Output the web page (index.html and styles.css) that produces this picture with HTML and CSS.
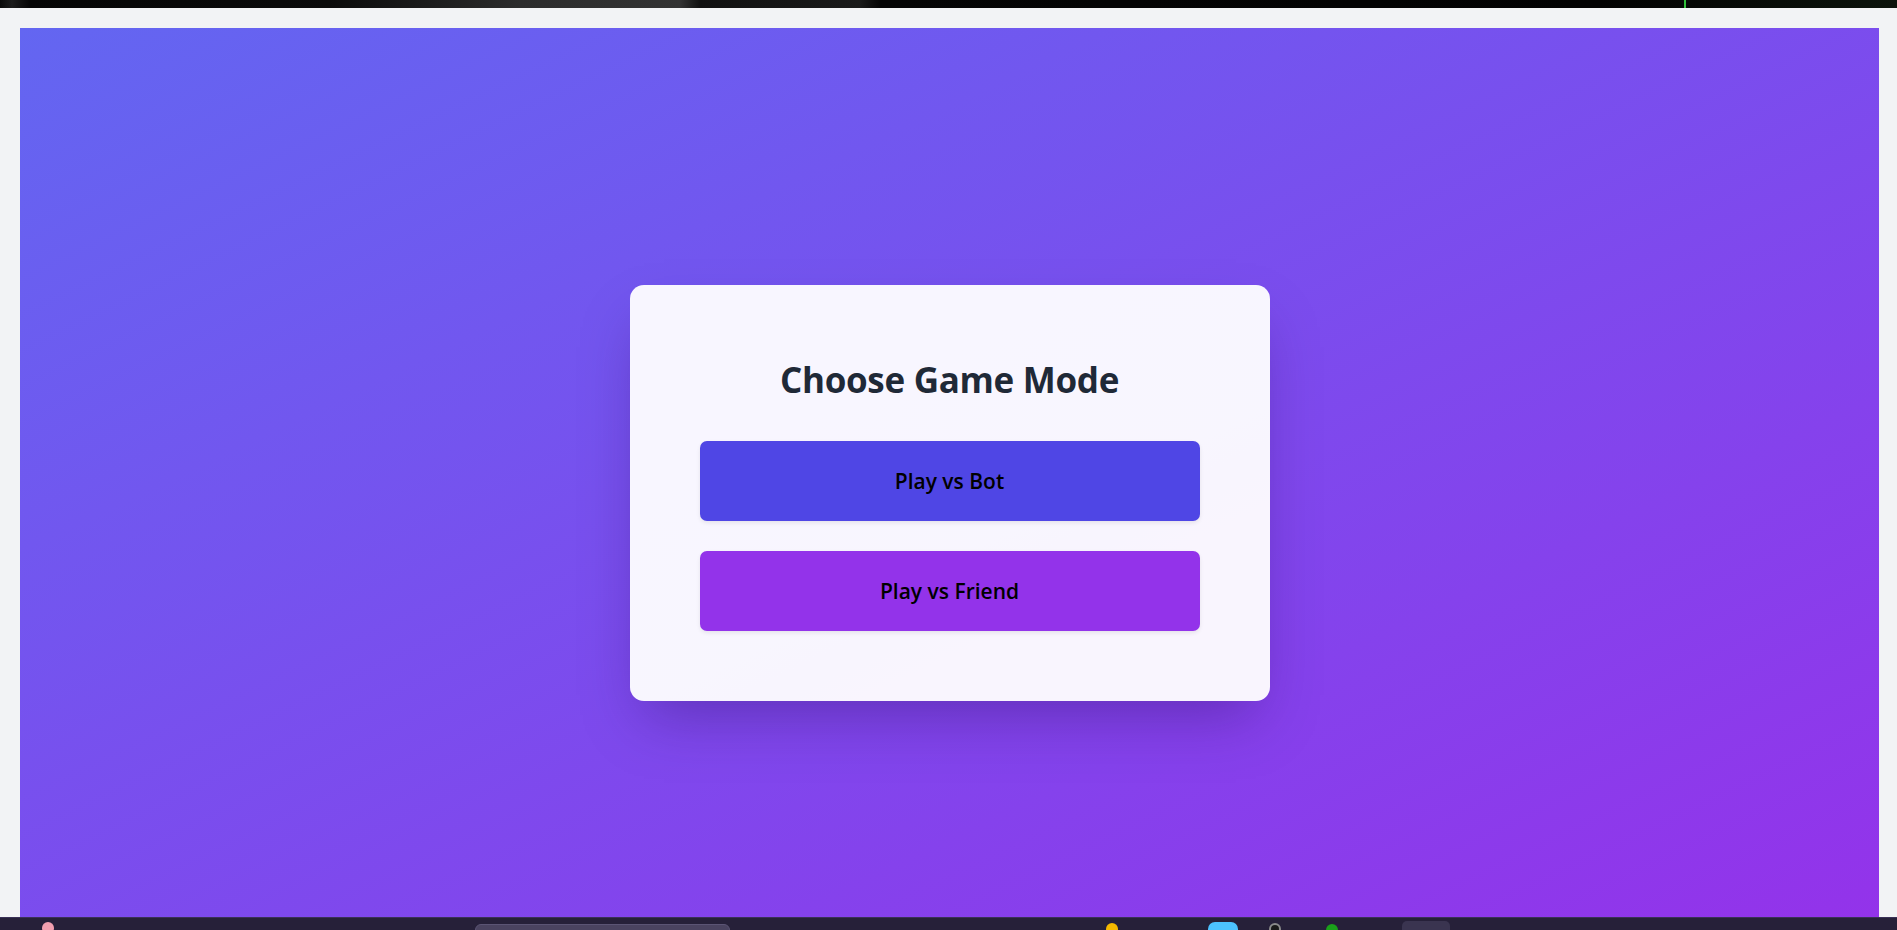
FILE: index.html
```html
<!DOCTYPE html>
<html lang="en">
<head>
<meta charset="utf-8">
<title>Choose Game Mode</title>
<link rel="stylesheet" href="styles.css">
</head>
<body>
  <div class="topstrip"><span class="glow"></span></div>
  <div class="shell">
    <main class="stage">
      <section class="card">
        <h1 class="title">Choose Game Mode</h1>
        <div class="actions">
          <button class="mode mode-bot">Play vs Bot</button>
          <button class="mode mode-friend">Play vs Friend</button>
        </div>
      </section>
    </main>
  </div>
  <footer class="taskbar">
    <span class="tb tb-pink"></span>
    <span class="tb tb-search"></span>
    <span class="tb tb-yellow"></span>
    <span class="tb tb-blue"></span>
    <span class="tb tb-dark"></span>
    <span class="tb tb-green"></span>
    <span class="tb tb-box"></span>
  </footer>
</body>
</html>
```

FILE: styles.css
```css
* { box-sizing: border-box; }
html, body { margin: 0; padding: 0; }
body {
  width: 1897px;
  height: 930px;
  overflow: hidden;
  background: #f2f3f5;
  font-family: "Open Sans", "Noto Sans", "Liberation Sans", sans-serif;
  display: flex;
  flex-direction: column;
}
.topstrip {
  height: 8px;
  flex: none;
  position: relative;
  background: linear-gradient(90deg, #0a0a0a 0px, #1c1c1c 12px, #050505 30px, #0b0b0b 330px, #2c2c2c 520px, #333 680px, #111 700px, #1a1a1a 860px, #050505 880px, #020202 1600px, #0c140c 1897px);
}
.glow {
  position: absolute;
  left: 1684px;
  top: 0;
  width: 2px;
  height: 8px;
  background: #2fbf3a;
}
.shell {
  flex: 1;
  display: flex;
  padding: 20px 18px 0 20px;
}
.stage {
  flex: 1;
  display: flex;
  align-items: center;
  justify-content: center;
  padding-top: 41px;
  background: linear-gradient(to bottom right, #6366f1, #9333ea);
}
.card {
  width: 640px;
  padding: 75px 70px 70px;
  background: rgba(255, 255, 255, 0.95);
  border-radius: 14px;
  box-shadow: 0 28px 56px -14px rgba(40, 10, 90, 0.35);
}
.title {
  margin: 0 0 41px;
  text-align: center;
  font-size: 35px;
  line-height: 40px;
  font-weight: 700;
  color: #1f2937;
  letter-spacing: -0.3px;
}
.actions {
  display: flex;
  flex-direction: column;
  gap: 30px;
}
.mode {
  height: 80px;
  border: none;
  border-radius: 7px;
  font-family: inherit;
  font-size: 21px;
  font-weight: 600;
  color: #000;
  box-shadow: 0 2px 4px rgba(0, 0, 0, 0.08);
  cursor: pointer;
}
.mode-bot { background: #4f46e5; }
.mode-friend { background: #9333ea; }
.taskbar {
  height: 13px;
  flex: none;
  background: #262039;
  border-top: 1px solid #3a3156;
  display: flex;
  align-items: flex-start;
  overflow: hidden;
}
.tb { flex: none; display: block; }
.tb-pink {
  margin: 4px 0 0 42px;
  width: 12px; height: 12px;
  border-radius: 50%;
  background: #f29fb0;
}
.tb-search {
  margin: 6px 0 0 421px;
  width: 255px; height: 12px;
  border-radius: 6px;
  background: #4a4360;
  border: 1px solid #5b5474;
}
.tb-yellow {
  margin: 5px 0 0 376px;
  width: 12px; height: 12px;
  border-radius: 50%;
  background: #f5b800;
}
.tb-blue {
  margin: 4px 0 0 90px;
  width: 30px; height: 14px;
  border-radius: 7px 7px 0 0;
  background: #4cc2ff;
}
.tb-dark {
  margin: 5px 0 0 31px;
  width: 12px; height: 12px;
  border-radius: 50%;
  background: #1a1a1a;
  border: 2px solid #8a8a8a;
}
.tb-green {
  margin: 6px 0 0 45px;
  width: 12px; height: 12px;
  border-radius: 50%;
  background: #1aa01a;
}
.tb-box {
  margin: 3px 0 0 64px;
  width: 48px; height: 14px;
  border-radius: 5px;
  background: #3a3450;
}
```
